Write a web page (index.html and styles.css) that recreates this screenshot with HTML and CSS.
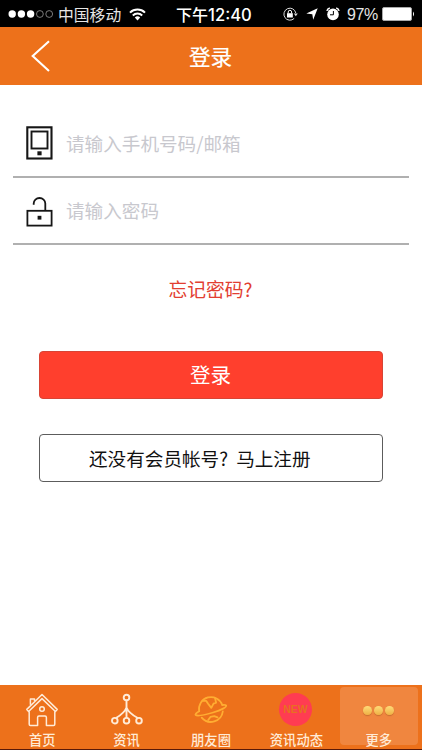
FILE: index.html
```html
<!DOCTYPE html>
<html lang="zh-CN">
<head>
<meta charset="utf-8">
<meta name="viewport" content="width=device-width, initial-scale=1">
<title>登录</title>
<link rel="stylesheet" href="styles.css">
</head>
<body>
<div class="screen">
  <div class="status">
    <div class="status-left">
      <svg class="signal" width="48" height="10" viewBox="0 0 48 10"><g fill="#fff"><circle cx="5.2" cy="5" r="3.7"/><circle cx="14.4" cy="5" r="3.7"/><circle cx="23.6" cy="5" r="3.7"/></g><g fill="none" stroke="#999" stroke-width=".8"><circle cx="32.9" cy="5" r="3.4"/><circle cx="42.2" cy="5" r="3.4"/></g></svg>
      <span class="carrier">中国移动</span>
      <svg class="wifi" width="17" height="13" viewBox="0 0 17 13"><g fill="none" stroke="#fff" stroke-width="2"><path d="M1 4.6a10.8 10.8 0 0 1 15 0"/><path d="M3.8 7.5a6.8 6.8 0 0 1 9.4 0"/></g><path d="M5.8 9.5a3.9 3.9 0 0 1 5.4 0L8.5 12.4z" fill="#fff"/></svg>
    </div>
    <span class="clock">下午<span class="digits">12:40</span></span>
    <div class="status-right">
      <svg width="15" height="14" viewBox="0 0 15 14"><path d="M11.2 11.4A6 6 0 1 1 12.8 6" fill="none" stroke="#ddd"/><path d="M10.8 6.5h4l-2 2.8z" fill="#ddd"/><rect x="4" y="6.2" width="5.8" height="4.3" fill="#fff"/><path d="M5.2 6.3V5a1.7 1.7 0 0 1 3.4 0v1.3" fill="none" stroke="#fff"/></svg>
      <svg class="locate" width="12" height="12" viewBox="0 0 12 12"><path d="M11.7.3 7.2 11.7 6.3 6.2.3 5.4z" fill="#fff"/></svg>
      <svg class="alarm" width="14" height="14" viewBox="0 0 14 14"><circle cx="7" cy="7.4" r="5.8" fill="#fff"/><path d="M.9 3.9A4 4 0 0 1 3.8 1M10.2 1a4 4 0 0 1 2.9 2.9" stroke="#fff" stroke-width="1.5" fill="none"/><path d="M7.4 4v3.8H4" stroke="#000" fill="none"/></svg>
      <span class="percent">97%</span>
      <svg width="33" height="14" viewBox="0 0 33 14"><rect x=".5" y=".5" width="29" height="13" rx="1.5" fill="#fff" stroke="#aaa"/><path d="M31 4.5q2 2.5 0 5z" fill="#fff"/></svg>
    </div>
  </div>
  <header class="header">
    <svg class="back" width="22" height="34" viewBox="0 0 22 34"><path d="M19 2.3 2.7 17 19 32" fill="none" stroke="#fff" stroke-width="2.1"/></svg>
    <h1 class="title">登录</h1>
  </header>
  <main class="main">
    <div class="field">
      <svg width="27" height="34" viewBox="0 0 27 34" fill="none" stroke="#161616"><rect x="1.3" y="1.3" width="24.2" height="31.2" stroke-width="2.1"/><rect x="5.5" y="5.5" width="16" height="17" stroke-width="1.9"/><rect x="11.4" y="25.3" width="4.2" height="4" fill="#161616" stroke="none"/></svg>
      <span class="placeholder">请输入手机号码/邮箱</span>
    </div>
    <div class="field field-password">
      <svg class="lock" width="27" height="30" viewBox="0 0 27 30" fill="none" stroke="#161616" stroke-width="1.8"><rect x="1.4" y="13.8" width="24.2" height="14.8"/><path d="M7.7 7.8V6.5a5.8 5.5 0 0 1 11.6 0v7.3"/><rect x="11.6" y="18.8" width="3.8" height="3.8" fill="#161616" stroke="none"/></svg>
      <span class="placeholder">请输入密码</span>
    </div>
    <a class="forgot">忘记密码?</a>
    <div class="button login">登录</div>
    <div class="button register">还没有会员帐号<span class="mark">?</span>马上注册</div>
  </main>
  <nav class="tabs">
    <div class="tab">
      <svg width="34" height="34" viewBox="0 0 34 34" fill="none" stroke="#ffebd7" stroke-width="1.5" stroke-linejoin="round"><path d="M5.4 11.8V6h4.1v2M1.8 16.4 17 1.5l15.2 14.9-1.8 2.1L17 5.6 3.6 18.5z"/><path d="M4.2 18.2v13q0 1.2 1.2 1.2h7.2v-8q0-1.4 1.4-1.4h6q1.4 0 1.4 1.4v8h7.2q1.2 0 1.2-1.2v-13"/><circle cx="17" cy="16" r="2.3"/></svg>
      <span>首页</span>
    </div>
    <div class="tab">
      <svg width="34" height="34" viewBox="0 0 34 34" fill="none" stroke="#ffebd7" stroke-width="1.9"><circle cx="16.5" cy="4.5" r="2.8"/><circle cx="4.8" cy="27.7" r="2.8"/><circle cx="16.5" cy="27.7" r="2.8"/><circle cx="29" cy="27.7" r="2.8"/><path d="M16.5 7.5v17.5M16.5 14.5Q14.5 20 6 25M16.5 14.5Q18.5 20 27.8 25"/></svg>
      <span>资讯</span>
    </div>
    <div class="tab">
      <svg width="34" height="34" viewBox="0 0 34 34" fill="none" stroke="#ffad32" stroke-width="1.8" stroke-linecap="round" stroke-linejoin="round"><path d="M5.2 18.2A12 12 0 0 1 28.3 12M28.8 18.5A12 12 0 0 1 7.7 24.6"/><path d="M5.2 18.2C2.5 19.8 1 21 1.6 21.9c1.2 1.6 9.2 0 17.5-2.4 8.4-2.6 13.8-5.4 13-7-.4-.8-1.6-.7-3.8-.5"/><path d="m9.3 7.8 3 .1 1.8 2.8 3.2 4.2 2.2-4.2 2.6-1-1-4.4M14.2 27l2.2-3.1 3.9-.8 3.2 1.3"/></svg>
      <span>朋友圈</span>
    </div>
    <div class="tab tab-news">
      <div class="new">NEW</div>
      <span>资讯动态</span>
    </div>
    <div class="tab tab-active">
      <div class="dots"><i></i><i></i><i></i></div>
      <span>更多</span>
    </div>
  </nav>
</div>
</body>
</html>
```
FILE: styles.css
```css
* {
  box-sizing: border-box;
}

body {
  margin: 0;
  font-family: "Noto Sans CJK SC", sans-serif;
}

svg {
  display: block;
  flex: none;
}

.screen {
  display: flex;
  flex-direction: column;
  width: 422px;
  height: 750px;
  background: #fff;
}

.status {
  display: grid;
  grid-template-columns: 176px 76px 1fr;
  align-items: center;
  height: 27px;
  padding-top: 1px;
  background: #000;
  color: #fff;
  white-space: nowrap;
}

.status-left,
.status-right {
  display: flex;
  align-items: center;
}

.status-left {
  padding-left: 7px;
}

.carrier {
  width: 63px;
  margin-left: 3px;
  padding-top: 1px;
  font-size: 15.8px;
  line-height: 24px;
  color: #e6e6e6;
}

.wifi {
  margin-left: 8px;
}

.clock {
  padding-top: 1px;
  font-size: 16px;
  font-weight: 500;
  line-height: 24px;
}

.digits {
  font-family: Inter, sans-serif;
  font-size: 16.6px;
  font-weight: 500;
}

.status-right {
  padding-left: 31px;
}

.locate {
  margin-left: 8px;
}

.alarm {
  margin-left: 8px;
}

.percent {
  width: 31px;
  margin: 1px 4px 0 7px;
  font-family: "Liberation Sans", sans-serif;
  font-size: 16px;
  letter-spacing: -0.4px;
  color: #e6e6e6;
}

.header {
  display: grid;
  grid-template-columns: 80px 1fr 80px;
  align-items: center;
  height: 58px;
  background: #ed711b;
  color: #fff;
}

.back {
  margin: -1px 0 0 30px;
}

.title {
  margin: 0 1px 0 0;
  font-size: 21.6px;
  font-weight: 400;
  line-height: 32px;
  text-align: center;
  -webkit-text-stroke: 0.2px #fff;
}

.main {
  display: flex;
  flex: 1;
  flex-direction: column;
  padding: 25px 13px 0;
}

.field {
  display: flex;
  align-items: center;
  gap: 13px;
  height: 68px;
  padding: 0 0 1px 13px;
  border-bottom: 2px solid #b0b0b0;
}

.field-password {
  height: 67px;
}

.lock {
  margin-top: 3px;
}

.placeholder {
  font-size: 18.6px;
  line-height: 28px;
  color: #c8c8ce;
}

.forgot {
  align-self: center;
  margin: 30px 1px 0 0;
  font-size: 18.8px;
  line-height: 28px;
  color: #e23e31;
}

.button {
  height: 48px;
  margin: 0 26px;
  border: 1px solid #5c5c5c;
  border-radius: 4px;
}

.login {
  margin-top: 48px;
  padding-right: 1px;
  border-color: #d84435;
  background: #ff3f2d;
  color: #fff;
  font-size: 20.6px;
  line-height: 45px;
  text-align: center;
}

.register {
  margin-top: 35px;
  padding-left: 49px;
  color: #111;
  font-size: 18.6px;
  line-height: 45px;
}

.mark {
  display: inline-block;
  width: 17px;
}

.tabs {
  display: grid;
  grid-template-columns: repeat(5, 1fr);
  height: 65px;
  border-bottom: 1px solid #5a1a08;
  background: #ed711b;
  color: #ffebd7;
}

.tab {
  display: flex;
  flex-direction: column;
  align-items: center;
  padding-top: 8px;
  font-size: 13.3px;
  font-weight: 500;
  line-height: 20px;
}

.tab span {
  margin-top: 3px;
}

.tab-news span {
  padding-left: 2px;
}

.new {
  width: 33px;
  height: 33px;
  margin-bottom: 1px;
  border-radius: 50%;
  background: #ff3c52;
  color: #e87020;
  font-family: "Liberation Sans", sans-serif;
  font-size: 10.4px;
  font-weight: 700;
  line-height: 34px;
  text-align: center;
}

.tab-active {
  height: 58px;
  margin: 2px 4px 0 2px;
  padding-top: 5px;
  border-radius: 4px;
  background: #f0863f;
}

.tab-active span {
  margin-top: 2px;
}

.dots {
  display: flex;
  flex: none;
  align-items: center;
  gap: 2px;
  height: 36px;
}

.dots i {
  width: 9px;
  height: 9px;
  border-radius: 50%;
  background: linear-gradient(#ffdc79, #eeb044);
  box-shadow: 0 1px 1px #a65b2288;
}
```
